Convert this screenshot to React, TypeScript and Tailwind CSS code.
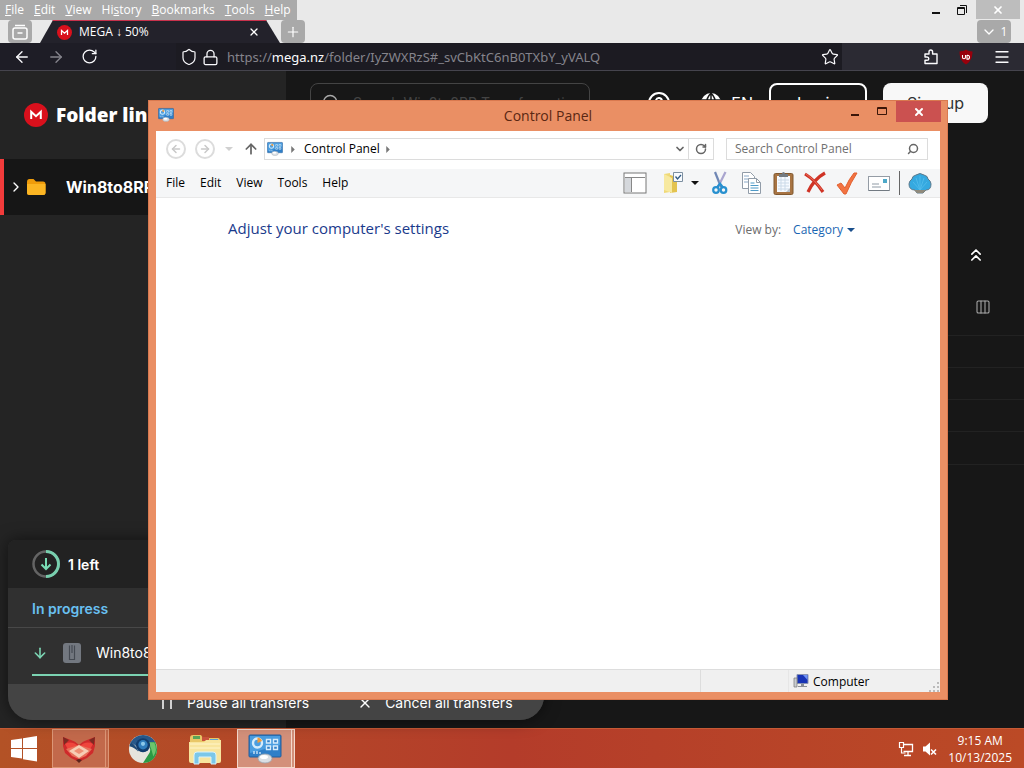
import type { ReactNode } from "react";
import {
  ArrowDown,
  ArrowLeft,
  ArrowRight,
  ArrowUp,
  ChevronDown,
  ChevronRight,
  ChevronsUp,
  CircleHelp,
  Columns3,
  Lock,
  Menu,
  Plus,
  RotateCw,
  Search,
  Shield,
  Star,
  X,
} from "lucide-react";

const uiFont = "font-['Open_Sans','Noto_Sans',sans-serif]";

function MegaLogo({ className }: { className: string }) {
  return (
    <svg viewBox="0 0 24 24" className={className} aria-hidden="true">
      <circle cx="12" cy="12" r="12" fill="#d9101c" />
      <path d="M7.200 16V8.800L12 13.200l4.800-4.400V16" fill="none" stroke="#fff" strokeWidth="2" />
    </svg>
  );
}

function PanelIcon({ className }: { className: string }) {
  return (
    <svg viewBox="0 0 34 30" className={className} aria-hidden="true">
      <rect x="1" y="1" width="32" height="22" rx="1" fill="#2f7fc8" stroke="#235f9c" />
      <path d="M2 2h30v9L2 19z" fill="#4b9ee0" />
      <circle cx="9.500" cy="9" r="4.500" fill="none" stroke="#d6ecfb" strokeWidth="2.400" />
      <path d="M9.500 9V3.500A5.500 5.500 0 0 1 14 7z" fill="#f29b3a" />
      <path d="M18.500 5.500h4v3.500h-4zM25.500 5.500h4v3.500h-4zM18.500 12h4v3.500h-4zM25.500 12h4v3.500h-4z" fill="#2f7fc8" stroke="#d6ecfb" strokeWidth="1.400" />
      <path d="M6 17v3M9 17v3M12 18v2" stroke="#d6ecfb" strokeWidth="1.300" />
      <ellipse cx="17" cy="24.500" rx="7" ry="4.500" fill="#dadfe4" stroke="#9aa4ae" strokeWidth=".8" />
      <ellipse cx="16" cy="23" rx="4" ry="2" fill="#fff" />
    </svg>
  );
}

function BrowserTop() {
  const menus = ["File", "Edit", "View", "History", "Bookmarks", "Tools", "Help"];
  return (
    <header className={`${uiFont} relative bg-[#e9e9e9]`}>
      <div className="flex h-5 items-start justify-between">
        <nav className="flex h-5 items-center gap-2.5 bg-[#aaaaaa] pr-1.5 pl-[5px] text-xs text-white">
          {menus.map((m) => (
            <button key={m} type="button">
              {m === "History" ? (
                <>
                  Hi<u>s</u>tory
                </>
              ) : (
                <>
                  <u>{m[0]}</u>
                  {m.slice(1)}
                </>
              )}
            </button>
          ))}
        </nav>
        <div className="flex">
          <button type="button" aria-label="Minimize" className="grid h-5 w-6 place-items-center">
            <svg viewBox="0 0 12 12" className="size-3">
              <path d="M2 9h8" stroke="#111" strokeWidth="2" />
            </svg>
          </button>
          <button type="button" aria-label="Restore" className="grid h-5 w-7 place-items-center">
            <svg viewBox="0 0 12 12" className="size-3" fill="none" stroke="#111">
              <path d="M1.500 3.500h7v7h-7zM1.500 4.500h7M4 1.500h6.500V9" />
            </svg>
          </button>
          <button type="button" aria-label="Close" className="mr-1 grid h-[19px] w-11 place-items-center bg-[#bdbdbd] text-white">
            <X className="size-3" strokeWidth={3.5} />
          </button>
        </div>
      </div>
      <div className="flex h-[23px] items-start">
        <button type="button" aria-label="Recent browsing" className="ml-2 grid h-[23px] w-6 place-items-center rounded bg-[#a9a9a9]">
          <svg viewBox="0 0 18 18" className="size-[18px]" fill="none" stroke="#fff" strokeWidth="1.500">
            <path d="M4 2.500h10M2 8V7q0-2 2-2h10q2 0 2 2v7q0 2-2 2H4q-2 0-2-2zM6.500 10h5" />
          </svg>
        </button>
        <div className="ml-2 flex h-[23px] w-60 items-center border-t border-[#c8324c] bg-[#23222b] pr-5 pl-[17px] text-xs text-white [clip-path:polygon(13px_0,226px_0,240px_100%,0_100%)]">
          <MegaLogo className="mr-[7px] size-[15px]" />
          <span className="grow">MEGA ↓ 50%</span>
          <button type="button" aria-label="Close tab">
            <X className="size-3" strokeWidth={2.5} />
          </button>
        </div>
        <button type="button" aria-label="New tab" className="ml-px grid h-[23px] w-6 place-items-center rounded bg-[#a9a9a9] text-white">
          <Plus className="size-4" strokeWidth={1.8} />
        </button>
        <button type="button" aria-label="List all tabs" className="mr-[13px] ml-auto flex h-[23px] w-[34px] items-center justify-center gap-1 rounded bg-[#a9a9a9] text-xs text-white">
          <ChevronDown className="size-4" />1
        </button>
      </div>
    </header>
  );
}

function AddressBar() {
  return (
    <div className="flex h-7 items-center border-b border-[#45444d] bg-[#2b2a33] font-['Noto_Sans','Open_Sans',sans-serif] text-[#fbfbfe]">
      <div className="flex h-full w-[176px] shrink-0 items-center gap-4 bg-[#1e1d26] pl-[13px]">
        <button type="button" aria-label="Back">
          <ArrowLeft className="size-[18px]" strokeWidth={1.8} />
        </button>
        <button type="button" aria-label="Forward" className="text-[#85848c]">
          <ArrowRight className="size-[18px]" strokeWidth={1.8} />
        </button>
        <button type="button" aria-label="Reload">
          <RotateCw className="size-[17px]" strokeWidth={1.8} />
        </button>
      </div>
      <div className="flex h-full grow items-center bg-[#1c1b22] pt-px pr-[3px]">
        <Shield className="ml-1 size-[18px]" strokeWidth={1.6} />
        <Lock className="ml-1 size-[17px]" strokeWidth={1.8} />
        <a href="#folder" className="ml-2 pt-px text-[13px] text-[#85848c]">
          https://<span className="text-[#fbfbfe]">mega.nz</span>/folder/IyZWXRzS#_svCbKtC6nB0TXbY_yVALQ
        </a>
        <button type="button" aria-label="Bookmark this page" className="ml-auto">
          <Star className="size-[18px]" strokeWidth={1.6} />
        </button>
      </div>
      <div className="flex w-[182px] shrink-0 items-center justify-end gap-[19px] pr-[13px]">
        <button type="button" aria-label="Extensions">
          <svg viewBox="0 0 16 16" className="size-4" fill="none" stroke="currentColor" strokeWidth="1.400" strokeLinejoin="round">
            <path d="M2 5h4V3q0-2 1.800-2t1.800 2v2H14v9.500H2v-3.200h2q1.800 0 1.800-1.600T4 8H2z" />
          </svg>
        </button>
        <button type="button" aria-label="Blocker">
          <svg viewBox="0 0 16 16" className="size-4">
            <path d="M8 .5c2 1.600 4 1.900 6.500 1.900C14.500 9 12 13 8 15.500 4 13 1.500 9 1.500 2.400 4 2.400 6 2.100 8 .5z" fill="#98000c" />
            <path d="M4.500 6v2.200q0 1.500 1.500 1.500t1.500-1.500V6M9 6v4.200h.5q2 0 2-2T9.500 6.200H9" fill="none" stroke="#fff" strokeWidth="1.100" />
          </svg>
        </button>
        <button type="button" aria-label="Open application menu">
          <Menu className="size-[18px]" strokeWidth={1.7} />
        </button>
      </div>
    </div>
  );
}

function MegaPage() {
  return (
    <main className="flex grow bg-[#171717] font-['Inter',sans-serif] text-white">
      <aside className="w-[286px] shrink-0 bg-[#242424]">
        <div className="flex h-[88px] items-center gap-2 pl-6">
          <MegaLogo className="size-6" />
          <h1 className="font-['Open_Sans','Inter',sans-serif] text-[19px] font-extrabold">Folder link</h1>
        </div>
        <a href="#folder" className="flex h-14 items-center border-l-4 border-[#f23b3b] bg-[#161616]">
          <ChevronRight className="ml-1 size-4" />
          <svg viewBox="0 0 20 18" className="ml-0.5 h-[18px] w-5">
            <path d="M1 4q0-3 2.500-3h4L10 3.500h7q2.500 0 2.500 2.500v8.500q0 2.500-2.500 2.500H3.500Q1 17 1 14.500z" fill="#ef9c0b" />
            <path d="M1 6h18.500v8.500q0 2.500-2.500 2.500H3.500Q1 17 1 14.500z" fill="#fbb523" />
          </svg>
          <span className="ml-5 text-base font-bold">Win8to8RP</span>
        </a>
      </aside>
      <section className="flex grow flex-col">
        <div className="flex items-start pt-3 pr-9">
          <label className="ml-6 flex h-10 w-[280px] items-center gap-3 rounded-lg border border-[#444] px-2.5">
            <Search className="size-5 shrink-0 text-[#aaa]" strokeWidth={1.6} />
            <input type="search" placeholder="Search Win8to8RP Transformation" className="min-w-0 grow text-sm placeholder:text-[#444]" />
          </label>
          <button type="button" aria-label="Help" className="mt-2 ml-auto">
            <CircleHelp className="size-6" />
          </button>
          <button type="button" className="mt-2 ml-7 flex h-6 items-center gap-2 text-base">
            <svg viewBox="0 0 24 24" className="size-6">
              <circle cx="12" cy="12" r="10" fill="#fff" />
              <path d="M12 2v20M2.500 9h19M2.500 15h19M12 2Q3 12 12 22M12 2q9 10 0 20" stroke="#171717" fill="none" strokeWidth="1.500" />
            </svg>
            EN
          </button>
          <button type="button" className="ml-4 h-10 w-[98px] rounded-lg border-2 border-white text-base">
            Login
          </button>
          <button type="button" className="ml-4 h-10 w-[105px] rounded-lg bg-[#f8f8f8] text-base text-[#303233]">
            Sign up
          </button>
        </div>
        <div className="mt-[122px] flex justify-end pr-[38px]">
          <button type="button" aria-label="Collapse">
            <ChevronsUp className="size-5" />
          </button>
        </div>
        <div className="mt-[34px] flex justify-end pr-[33px] text-[#aaa]">
          <button type="button" aria-label="Columns">
            <Columns3 className="size-4" strokeWidth={1.6} />
          </button>
        </div>
        <div className="mt-5 h-[130px] divide-y divide-[#222] border-y border-[#222]">
          <div className="h-8" />
          <div className="h-8" />
          <div className="h-8" />
          <div className="h-8" />
        </div>
      </section>
    </main>
  );
}

function Transfers() {
  return (
    <section className="w-[536px] overflow-hidden rounded-t-lg rounded-b-3xl bg-[#303030] font-['Inter',sans-serif] text-white shadow-[0_0_16px_#0008]">
      <div className="flex h-12 items-center gap-2 bg-[#222222] pl-6">
        <svg viewBox="0 0 28 28" className="size-7" fill="none">
          <circle cx="14" cy="14" r="12.500" stroke="#646464" strokeWidth="2.500" />
          <path d="M14 1.500a12.500 12.500 0 0 1 0 25" stroke="#78cfae" strokeWidth="3" />
          <path d="M14 8v11M9.500 14.500 14 19l4.500-4.500" stroke="#78dcb4" strokeWidth="2" />
        </svg>
        <strong className="pt-0.5 text-sm font-semibold">1 left</strong>
      </div>
      <h2 className="flex h-10 items-center border-b border-[#484848] pt-0.5 pl-6 text-sm font-semibold text-[#69c0f2]">In progress</h2>
      <div className="h-14 pl-6">
        <div className="flex h-12 items-center border-b-2 border-[#7bd3b2] pt-1">
          <ArrowDown className="size-4 text-[#7bd3b2]" strokeWidth={2.4} />
          <svg viewBox="0 0 20 22" className="ml-[14px] h-[22px] w-5">
            <rect x="1" y="1" width="18" height="20" rx="3" fill="#737880" />
            <path d="M10 3v8M7.500 3.500v14h5v-14" stroke="#454a52" fill="none" strokeWidth="1.200" />
          </svg>
          <span className="ml-[14px] text-sm">Win8to8RP.zip</span>
        </div>
      </div>
      <div className="flex h-9 items-center bg-[#444444] pt-0.5 pl-[151px] text-sm">
        <button type="button" className="flex items-center gap-3">
          <svg viewBox="0 0 16 16" className="size-4">
            <path d="M4 2v12M12 2v12" stroke="#fff" strokeWidth="1.500" />
          </svg>
          Pause all transfers
        </button>
        <button type="button" className="ml-12 flex items-center gap-3">
          <X className="size-4" />
          Cancel all transfers
        </button>
      </div>
    </section>
  );
}

function Tool({ label, children }: { label: string; children: ReactNode }) {
  return (
    <button type="button" aria-label={label} className="grid h-6 w-6 place-items-center">
      <svg viewBox="0 0 24 24" className="size-6" fill="none">
        {children}
      </svg>
    </button>
  );
}

function Toolbar() {
  return (
    <div className="flex items-center gap-2">
      <Tool label="Navigation pane">
        <rect x="1" y="2" width="22" height="20" fill="#fff" stroke="#777" />
        <path d="M2 6.500h20M8.500 6.500V21" stroke="#888" />
        <path d="M2 7h6v14H2z" fill="#d5d8dc" />
      </Tool>
      <div className="ml-1.5 flex items-center gap-1.5">
        <Tool label="Select">
          <path d="m3 3 6-1v19l-6 1z" fill="#efd978" />
          <path d="m9 4 7 2v15l-7 1z" fill="#e3c350" />
          <path d="m3 3 8 4v15l-8-3z" fill="#f7e9a0" />
          <path d="M12.500 1.500h9v9h-9z" fill="#f8fbff" stroke="#7c8fa0" />
          <path d="m14.500 5.500 2 2.500 3.500-4" stroke="#315a83" strokeWidth="1.300" />
        </Tool>
        <button type="button" aria-label="Select options" className="grid h-6 w-2 place-items-center">
          <svg viewBox="0 0 8 4" className="h-1 w-2">
            <path d="M0 0h8L4 4z" fill="#111" />
          </svg>
        </button>
      </div>
      <Tool label="Cut">
        <path d="m8 1 6 15" stroke="#6f86b4" strokeWidth="2.200" />
        <path d="M18.500 1 11 16" stroke="#a9a5cf" strokeWidth="2.200" />
        <circle cx="9" cy="19" r="2.800" stroke="#2890cf" strokeWidth="2.200" />
        <circle cx="16.500" cy="19" r="2.800" stroke="#2890cf" strokeWidth="2.200" />
        <path d="m10 16.500 3-4 3 4" stroke="#2890cf" strokeWidth="2.200" />
      </Tool>
      <Tool label="Copy">
        <path d="M3.500 1.500h8l4 4v12h-12z" fill="#fff" stroke="#919ca8" />
        <path d="M5 5h5M5 8h5M5 11h5" stroke="#8aa9c8" />
        <path d="M9.500 7.500h8l4 4v11h-12z" fill="#fff" stroke="#919ca8" />
        <path d="M17.500 7.500v4h4" stroke="#919ca8" />
        <path d="M11.500 12h4M11.500 14.500h8M11.500 17h8M11.500 19.500h8" stroke="#4f9ac7" />
      </Tool>
      <Tool label="Paste">
        <rect x="3" y="2.500" width="19" height="21" rx="1.500" fill="#a87443" stroke="#80582f" />
        <path d="M6 5h13v16H6z" fill="#f6faff" />
        <path d="M7 9h11M7 12h11M7 15h11M7 18h11M10 6v14M14 6v14" stroke="#cbdae8" />
        <path d="M8 6V3h3q0-2 1.500-2T14 3h3v3z" fill="#747b82" />
        <path d="m15 21 4-4v4z" fill="#b9c2ca" />
      </Tool>
      <Tool label="Delete">
        <path d="M2 3q10 6 18 18M22 2Q11 8 5 21" stroke="#cf3325" strokeWidth="3.200" />
        <path d="M3 3q9 6 16 16" stroke="#eb6b59" />
      </Tool>
      <Tool label="Properties">
        <path d="m2 14 4-2 4 5Q14 8 19 2h3Q16 11 11 23H9z" fill="#f27342" stroke="#e2602f" />
      </Tool>
      <Tool label="Rename">
        <rect x="1.500" y="5.500" width="21" height="14" fill="#fff" stroke="#949ca5" />
        <path d="M5 13h7M5 16h9" stroke="#8f9aa5" />
        <path d="M16 8h4v4h-4z" fill="#4ea9c9" />
        <path d="M2 19.500h20" stroke="#727a82" />
      </Tool>
      <div className="flex items-center gap-2 border-l border-[#666] pl-2">
        <Tool label="Shell options">
          <path d="M7 19Q1 19 1 13q0-3 3-5 0-3 4-4 4-3 8 0 4 1 4 4 3 2 3 5 0 6-5 6l-3 3H9z" fill="#35a9e0" stroke="#5d7a8c" />
          <path d="M12 19 5 11M12 19 8 7M12 19V5M12 19l4-12M12 19l7-8" stroke="#4fbaea" />
          <path d="M6 19h12l-3 3H9z" fill="#8f8a7c" />
        </Tool>
      </div>
    </div>
  );
}

function ControlPanelWindow() {
  return (
    <section
      aria-label="Control Panel"
      className={`${uiFont} absolute top-[100px] left-[148px] flex h-[600px] w-[800px] flex-col border border-[#d9794f] bg-[#ea8f64] px-[7px] pb-[7px] text-xs text-black`}
    >
      <div className="relative flex h-[30px] shrink-0 items-start justify-between">
        <PanelIcon className="mt-1.5 ml-0.5 size-4" />
        <h2 className="absolute inset-x-0 top-[3px] text-center text-sm leading-6 text-[#5a2713]">Control Panel</h2>
        <div className="relative -mr-px flex">
          <button type="button" aria-label="Minimize" className="grid h-[21px] w-6 place-items-center">
            <svg viewBox="0 0 12 12" className="size-3">
              <path d="M2 9h8" stroke="#3b1609" strokeWidth="2" />
            </svg>
          </button>
          <button type="button" aria-label="Maximize" className="grid h-[21px] w-[29px] place-items-center">
            <svg viewBox="0 0 12 12" className="size-3" fill="none" stroke="#3b1609">
              <path d="M1.500 1.500h9v7h-9zM1 2.500h10" />
            </svg>
          </button>
          <button type="button" aria-label="Close" className="grid h-[21px] w-[45px] place-items-center bg-[#cb5150] text-white">
            <X className="size-3" strokeWidth={4} />
          </button>
        </div>
      </div>
      <div className="flex min-h-0 grow flex-col bg-white">
        <div className="flex h-[38px] shrink-0 items-center pr-3 pb-0.5 pl-2.5">
          <button type="button" aria-label="Back" className="grid size-5 place-items-center rounded-full border-2 border-[#dcdcdc] text-[#c9c9c9]">
            <ArrowLeft className="size-3" strokeWidth={3} />
          </button>
          <button type="button" aria-label="Forward" className="ml-[9px] grid size-5 place-items-center rounded-full border-2 border-[#dcdcdc] text-[#c9c9c9]">
            <ArrowRight className="size-3" strokeWidth={3} />
          </button>
          <button type="button" aria-label="Recent locations" className="ml-2.5">
            <svg viewBox="0 0 8 4" className="h-1 w-2">
              <path d="M0 0h8L4 4z" fill="#d0d0d0" />
            </svg>
          </button>
          <button type="button" aria-label="Up" className="ml-2.5 text-[#666]">
            <ArrowUp className="size-4" strokeWidth={2.6} />
          </button>
          <div className="ml-[5px] flex h-[22px] grow items-center border border-[#dcdcdc] pl-0.5">
            <PanelIcon className="size-4" />
            <svg viewBox="0 0 4 8" className="ml-2 h-[7px] w-1">
              <path d="M0 0v8l4-4z" fill="#777" />
            </svg>
            <a href="#control-panel" className="ml-[9px]">
              Control Panel
            </a>
            <svg viewBox="0 0 4 8" className="ml-1.5 h-[7px] w-1">
              <path d="M0 0v8l4-4z" fill="#777" />
            </svg>
            <button type="button" aria-label="Previous locations" className="ml-auto grid h-full w-4 place-items-center text-[#666]">
              <ChevronDown className="size-3" strokeWidth={3.5} />
            </button>
            <button type="button" aria-label="Refresh" className="grid h-full w-[25px] place-items-center border-l border-[#dcdcdc] text-[#666]">
              <RotateCw className="size-3" strokeWidth={3} />
            </button>
          </div>
          <label className="ml-3 flex h-[22px] w-[202px] items-center border border-[#dcdcdc] pr-2 pl-2">
            <input type="search" placeholder="Search Control Panel" className="min-w-0 grow outline-none placeholder:text-[#707070]" />
            <Search className="size-3 -scale-x-100 text-[#666]" strokeWidth={3} />
          </label>
        </div>
        <div className="flex h-[29px] shrink-0 items-center justify-between border-b border-[#e8e8e8] bg-[#f5f6f7] pr-2 pl-2.5">
          <nav className="flex gap-[15px]">
            <button type="button">File</button>
            <button type="button">Edit</button>
            <button type="button">View</button>
            <button type="button">Tools</button>
            <button type="button">Help</button>
          </nav>
          <Toolbar />
        </div>
        <div className="flex grow items-start justify-between pt-[18px] pr-[85px] pl-[72px]">
          <h1 className="text-[15px] leading-6 text-[#1a3a8c]">Adjust your computer's settings</h1>
          <div className="flex items-center gap-3 pt-0.5 leading-6 text-[#6d6d6d]">
            <span>View by:</span>
            <button type="button" className="flex items-center gap-1 text-[#1965b2]">
              Category
              <svg viewBox="0 0 8 4" className="h-1 w-2">
                <path d="M0 0h8L4 4z" fill="#1a4f8c" />
              </svg>
            </button>
          </div>
        </div>
        <footer className="flex h-[23px] shrink-0 items-center border-t border-[#dddddd] bg-[#f0f0f0]">
          <div className="h-full grow border-r border-[#dddddd]" />
          <div className="h-full w-[88px] border-r border-[#e6e6e6]" />
          <div className="flex h-full w-[151px] items-center gap-1 pl-1">
            <svg viewBox="0 0 16 16" className="size-4">
              <path d="M4 1.500h11v9H4z" fill="#1733b5" stroke="#8993b2" />
              <path d="M10 2h4.500v5z" fill="#6f92f4" />
              <path d="M8 11h3v2h3v1H5v-1h3z" fill="#8a8f96" />
              <path d="M1 5h3v9H1z" fill="#c9ccd0" stroke="#777" strokeWidth=".7" />
            </svg>
            <span className="grow pt-0.5">Computer</span>
            <svg viewBox="0 0 10 10" className="mr-px size-2.5 self-end" fill="#bbbbbb">
              <path d="M8 0h2v2H8zM4 4h2v2H4zM8 4h2v2H8zM0 8h2v2H0zM4 8h2v2H4zM8 8h2v2H8z" />
            </svg>
          </div>
        </footer>
      </div>
    </section>
  );
}

function Taskbar() {
  return (
    <footer className={`${uiFont} flex h-10 items-center border-t border-[#c65a35] bg-linear-to-r from-[#b35226] via-[#b43c2a] to-[#bb4a26] text-xs text-white`}>
      <button type="button" aria-label="Start" className="grid h-full w-12 place-items-center">
        <svg viewBox="0 0 28 26" className="h-[26px] w-7" fill="#fff">
          <path d="m1 4 11-1.600V12H1zM13 2.200 27 0v12H13zM1 13h11v9.600L1 21zM13 13h14v12.500l-14-2.200z" />
        </svg>
      </button>
      <button type="button" aria-label="Browser" className="ml-1 flex h-full w-[57px] border border-[#dc9676] bg-[#c2694b]">
        <span className="grid h-full w-[53px] place-items-center border-r border-[#dc9676]">
          <svg viewBox="0 0 34 28" className="h-7 w-[34px]">
            <path d="M1 2 9 5q4 1 8 5 4-4 8-5l8-3v9l-2 7-6 5-8 4-8-4-6-5-2-7z" fill="#cf2a2b" />
            <path d="M1 2l6 3-5 5zM33 2l-6 3 5 5z" fill="#7c2a22" />
            <path d="M3 9q7-4 14 3 7-7 14-3l-5 9H8z" fill="#ef453c" />
            <path d="m4 14 13-4 13 4-6 7-7 3-7-3z" fill="#e8705a" />
            <path d="m7 16 10-6 10 6-10 7z" fill="#f6cdb4" />
            <path d="m12 16 5-3 5 3-5 3z" fill="#ee8f74" />
            <path d="m14 25 3-1 3 1-3 3z" fill="#5c241c" />
          </svg>
        </span>
      </button>
      <button type="button" aria-label="Web browser" className="grid h-full w-[67px] place-items-center">
        <svg viewBox="0 0 32 32" className="size-[30px]">
          <circle cx="16" cy="16" r="15" fill="#e6e4dc" />
          <path d="M16 1q9 0 13.500 8H16L9 13 3 8.500Q8 1 16 1z" fill="#27588a" />
          <path d="M29 8.500Q34 20 26 27.500q-4 3.500-10 3.500l7-11q2-5-2-11z" fill="#2c9a44" />
          <path d="M28 9q4 8-1 15-2-9-5-15z" fill="#6cc56d" />
          <path d="M1.500 13 3 8q7 6 8 11-4-5-9.500-6z" fill="#1d4a78" />
          <circle cx="16" cy="12" r="7.500" fill="#123d6e" />
          <circle cx="16" cy="11.500" r="5" fill="#2f7cbc" />
          <circle cx="16" cy="10.500" r="2.200" fill="#8cc8ea" />
        </svg>
      </button>
      <button type="button" aria-label="File Explorer" className="grid h-full w-[57px] place-items-center">
        <svg viewBox="0 0 34 32" className="h-8 w-[34px]">
          <path d="M2 5q0-3 3-3h8l2 3h15q2 0 2 3v20H2z" fill="#e9c767" />
          <path d="M5 3h7v3H5z" fill="#5ba65a" />
          <path d="M14 4h7v4h-7z" fill="#c9533c" />
          <path d="M22 6h8v4h-8z" fill="#59a1d0" />
          <path d="M1 9h15l2-2h15v21q0 2-2 2H3q-2 0-2-2z" fill="#f8e59d" />
          <path d="M2 11h30M2 15h30" stroke="#fff5c9" />
          <path d="M6 31V22q0-3 3-3h16q3 0 3 3v9h-5v-7H11v7z" fill="#7cc7e8" stroke="#d8f2fc" />
        </svg>
      </button>
      <button type="button" aria-label="Control Panel" className="ml-1 flex h-full w-[58px] border border-[#f5d9cc] bg-[#d3907a]">
        <span className="grid h-full w-[54px] place-items-center border-r border-[#f5d9cc]">
          <PanelIcon className="h-[30px] w-[34px]" />
        </span>
      </button>
      <div className="mr-3 ml-auto flex items-center">
        <svg viewBox="0 0 16 16" className="size-4" fill="none" stroke="#fff">
          <path d="M5.500 3.500h9v7h-9M10 11v3M6 14.500h7" strokeWidth="1.300" />
          <path d="M1.500 1.500h4v5h-4zM3.500 7v5h4" strokeWidth="1.200" />
        </svg>
        <svg viewBox="0 0 16 16" className="ml-2 size-4">
          <path d="M1 5.500h2.500L8 1.500v13L3.500 10.500H1z" fill="#fff" />
          <path d="m9 8.500 5 5M14 8.500l-5 5" stroke="#fff" strokeWidth="1.600" />
        </svg>
        <time className="ml-2.5 text-center leading-[17px]">
          9:15 AM
          <br />
          10/13/2025
        </time>
      </div>
    </footer>
  );
}

export default function App() {
  return (
    <div className="relative flex min-h-screen flex-col overflow-hidden bg-[#171717]">
      <BrowserTop />
      <AddressBar />
      <div className="relative flex grow">
        <MegaPage />
        <div className="absolute bottom-2 left-2">
          <Transfers />
        </div>
      </div>
      <Taskbar />
      <ControlPanelWindow />
    </div>
  );
}
